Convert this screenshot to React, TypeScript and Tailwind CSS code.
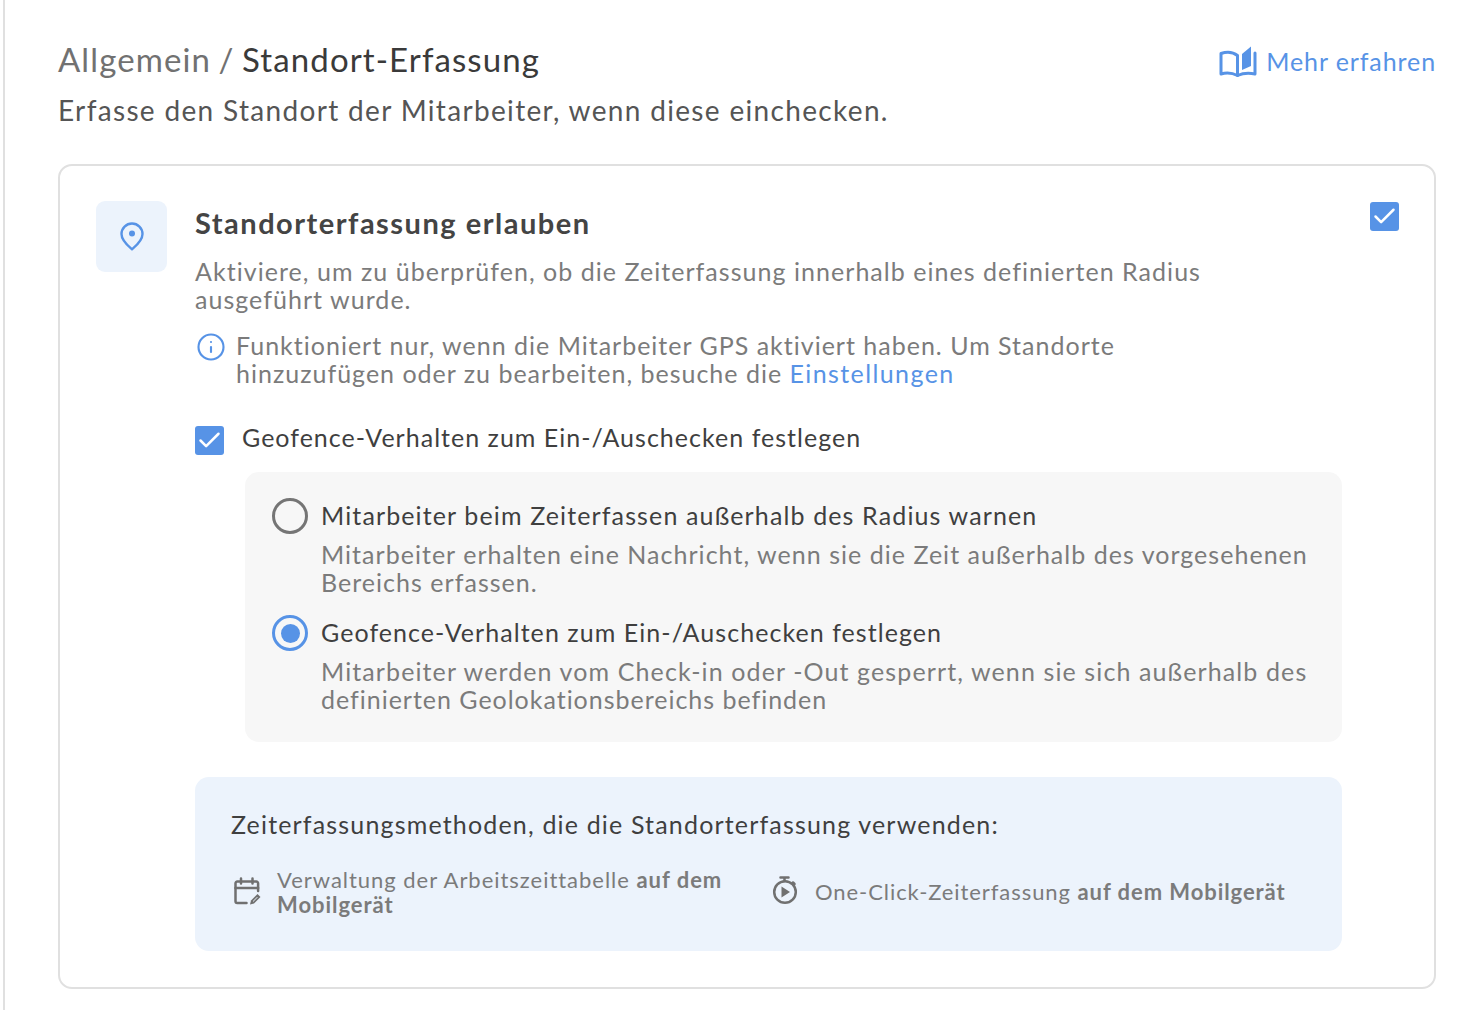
import { Check, Info } from "lucide-react";

function CheckBox({ className }: { className?: string }) {
  return (
    <div className={`flex h-[29px] w-[29px] shrink-0 items-center justify-center rounded-[3px] bg-[#5793e6] ${className ?? ""}`}>
      <Check className="h-[27px] w-[27px] text-white" strokeWidth={2.2} />
    </div>
  );
}

function PinIcon() {
  return (
    <svg width="24" height="29" viewBox="0 0 24 29" fill="none" stroke="#5793e6" strokeWidth="2.400" strokeLinejoin="round">
      <path d="M12 27.300C8 23.800 1.500 18.800 1.500 12a10.500 10.500 0 0 1 21 0c0 6.800-6.500 11.800-10.500 15.300z" />
      <circle cx="12" cy="11.500" r="3" fill="#5793e6" stroke="none" />
    </svg>
  );
}

function BookIcon() {
  return (
    <svg width="38" height="32" viewBox="0 0 38 32" fill="none" stroke="#5793e6" strokeWidth="3" strokeLinejoin="round" strokeLinecap="round">
      <path d="M2 8.500v20.500c6-1.600 11-1.200 16.500 1.500V10.500C14 7 8 6.500 2 8.500z" />
      <path d="M18.500 30.500c6-2.700 11-3 17.500-1.500V8" />
      <path d="M23 9l9-7.500v19.500l-9 4z" fill="#5793e6" stroke="none" />
    </svg>
  );
}

function CalendarEditIcon() {
  return (
    <svg width="28" height="28" viewBox="0 0 28 28" fill="none" stroke="#707070" strokeWidth="2.500" strokeLinecap="round" strokeLinejoin="round">
      <path d="M13.500 26H4.300a1.800 1.800 0 0 1-1.800-1.800V6.300a1.800 1.800 0 0 1 1.800-1.800h19a1.800 1.800 0 0 1 1.800 1.800V14" />
      <path d="M2.500 11h22.600" />
      <path d="M8 1.500v5M19.500 1.500v5" />
      <path d="M17 27.500l1-4 6.500-6.500 3 3-6.500 6.500z" fill="#707070" stroke="none" />
      <path d="M20.300 24.200l3.800-3.800" stroke="#ecf3fc" strokeWidth="1" />
    </svg>
  );
}

function TimerPlayIcon() {
  return (
    <svg width="28" height="32" viewBox="0 0 28 32" fill="none" stroke="#707070" strokeWidth="2.500" strokeLinecap="round" strokeLinejoin="round">
      <path d="M9.500 2.500h8M13.500 2.500v3.500M22 7.500l1.500 1.500" />
      <circle cx="14" cy="17" r="10.800" />
      <path d="M10.500 11.500l8.500 5.500-8.500 5.500z" fill="#707070" stroke="none" />
    </svg>
  );
}

function Radio({ selected }: { selected?: boolean }) {
  return (
    <div className={`flex h-9 w-9 shrink-0 items-center justify-center rounded-full border-[3px] ${selected ? "border-[#5793e6]" : "border-[#757575]"}`}>
      {selected && <div className="h-[19px] w-[19px] rounded-full bg-[#5793e6]" />}
    </div>
  );
}

export default function App() {
  return (
    <div className="h-[1010px] w-[1484px] overflow-hidden bg-white font-['Lato',sans-serif]">
      <div className="ml-[3px] h-full border-l-2 border-[#e0e0e0] pl-[53px] pr-[48px] pt-[39px]">
        <div className="flex items-start justify-between">
          <div>
            <h1 className="text-[33px] leading-[40px] tracking-[1.1px] text-[#717171] [word-spacing:-2px]">
              Allgemein / <span className="text-[#3a3a3a]">Standort-Erfassung</span>
            </h1>
            <p className="mt-[15px] text-[28px] leading-[32px] tracking-[1.33px] text-[#555555]">
              Erfasse den Standort der Mitarbeiter, wenn diese einchecken.
            </p>
          </div>
          <a className="mt-[6px] flex items-center gap-[9px] text-[25px] leading-[32px] tracking-[0.9px] text-[#5793e6]">
            <BookIcon />
            Mehr erfahren
          </a>
        </div>

        <div className="mt-[38px] h-[825px] rounded-[14px] border-2 border-[#e0e0e0] pl-[36px] pr-[35px] pt-[35px]">
          <div className="flex">
            <div className="flex h-[71px] w-[71px] shrink-0 items-center justify-center rounded-[9px] bg-[#ecf3fc]">
              <PinIcon />
            </div>
            <div className="ml-[28px] flex-1">
              <div className="flex items-start justify-between">
                <h2 className="mt-[2px] text-[29px] font-bold leading-[40px] tracking-[1.5px] text-[#444444]">
                  Standorterfassung erlauben
                </h2>
                <CheckBox className="mt-px" />
              </div>
              <p className="mt-[14px] text-[25px] leading-[28px] tracking-[1.04px] text-[#7b7b7b]">
                Aktiviere, um zu überprüfen, ob die Zeiterfassung innerhalb eines definierten Radius
                <br />
                ausgeführt wurde.
              </p>
              <div className="mt-[18px] flex">
                <Info className="ml-px mt-px h-[30px] w-[30px] shrink-0 text-[#5793e6]" strokeWidth={1.7} />
                <p className="ml-[10px] text-[25px] leading-[28px] tracking-[1px] text-[#7b7b7b]">
                  Funktioniert nur, wenn die Mitarbeiter GPS aktiviert haben. Um Standorte
                  <br />
                  hinzuzufügen oder zu bearbeiten, besuche die <span className="tracking-[1.4px] text-[#5793e6]">Einstellungen</span>
                </p>
              </div>
              <div className="mt-[39px] flex items-start">
                <CheckBox />
                <span className="-mt-[3px] ml-[18px] text-[25px] leading-[28px] tracking-[1.02px] text-[#3f3f3f]">
                  Geofence-Verhalten zum Ein-/Auschecken festlegen
                </span>
              </div>

              <div className="ml-[50px] mr-[57px] mt-[17px] h-[270px] rounded-[14px] bg-[#f7f7f7] pl-[27px] pt-[26px]">
                <div className="flex">
                  <Radio />
                  <div className="-mt-px ml-[13px]">
                    <div className="text-[25px] leading-[36px] tracking-[1.13px] text-[#3f3f3f]">
                      Mitarbeiter beim Zeiterfassen außerhalb des Radius warnen
                    </div>
                    <p className="mt-[7px] text-[25px] leading-[28px] tracking-[1.03px] text-[#7b7b7b]">
                      Mitarbeiter erhalten eine Nachricht, wenn sie die Zeit außerhalb des vorgesehenen
                      <br />
                      Bereichs erfassen.
                    </p>
                  </div>
                </div>
                <div className="mt-[19px] flex">
                  <Radio selected />
                  <div className="-mt-px ml-[13px]">
                    <div className="text-[25px] leading-[36px] tracking-[1.06px] text-[#3f3f3f]">
                      Geofence-Verhalten zum Ein-/Auschecken festlegen
                    </div>
                    <p className="mt-[7px] text-[25px] leading-[28px] tracking-[0.98px] text-[#7b7b7b]">
                      <span className="tracking-[1.11px]">Mitarbeiter werden vom Check-in oder -Out gesperrt, wenn sie sich außerhalb des</span>
                      <br />
                      definierten Geolokationsbereichs befinden
                    </p>
                  </div>
                </div>
              </div>

              <div className="mr-[57px] mt-[35px] h-[174px] rounded-[14px] bg-[#ecf3fc] pl-[36px] pt-[30px]">
                <div className="text-[25px] leading-[34px] tracking-[1.17px] text-[#3f3f3f]">
                  Zeiterfassungsmethoden, die die Standorterfassung verwenden:
                </div>
                <div className="mt-[25px] flex items-center">
                  <div className="flex w-[540px] items-center">
                    <div className="-mt-[2px] ml-[2px] shrink-0">
                      <CalendarEditIcon />
                    </div>
                    <p className="ml-[16px] mt-px text-[22px] leading-[25px] tracking-[0.97px] text-[#7b7b7b]">
                      Verwaltung der Arbeitszeittabelle <b className="font-bold">auf dem</b>
                      <br />
                      <b className="font-bold">Mobilgerät</b>
                    </p>
                  </div>
                  <div className="flex items-center">
                    <div className="-mt-[2px] shrink-0">
                      <TimerPlayIcon />
                    </div>
                    <p className="ml-[16px] text-[22px] leading-[25px] tracking-[0.93px] text-[#7b7b7b]">
                      One-Click-Zeiterfassung <b className="font-bold">auf dem Mobilgerät</b>
                    </p>
                  </div>
                </div>
              </div>
            </div>
          </div>
        </div>
      </div>
    </div>
  );
}
